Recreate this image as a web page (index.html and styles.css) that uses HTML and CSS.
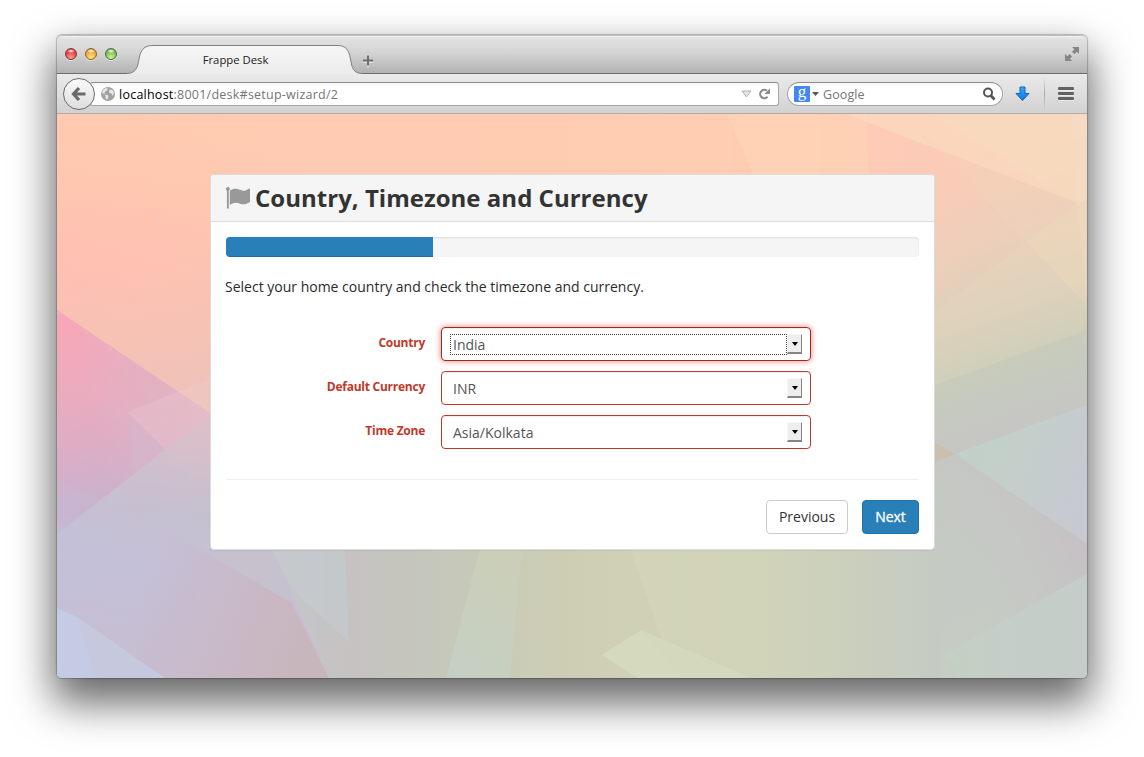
FILE: index.html
```html
<!DOCTYPE html>
<html lang="en">
<head>
<meta charset="utf-8">
<title>Frappe Desk</title>
<link rel="stylesheet" href="styles.css">
</head>
<body>
<div class="window">
  <header class="titlebar">
    <div class="lights"><i class="light red"></i><i class="light amber"></i><i class="light green"></i></div>
    <div class="tab">
      <svg class="tab-shape" width="236" height="29" viewBox="0 0 236 29">
        <defs><linearGradient id="tabfill" x1="0" y1="0" x2="0" y2="1"><stop offset="0" stop-color="#f6f6f6"/><stop offset="1" stop-color="#ececec"/></linearGradient></defs>
        <path d="M0 29V28.5C10 28.5 11 20 12 14C13.500 5 17 .5 26 .5H210C219 .5 222 5 223.500 14C225 23 226 28.500 236 28.500V29Z" fill="url(#tabfill)"/>
        <path d="M0 28.500C10 28.500 11 20 12 14C13.500 5 17 .5 26 .5H210C219 .5 222 5 223.500 14C225 23 226 28.500 236 28.500" fill="none" stroke="#808080"/>
      </svg>
      <span class="tab-title">Frappe Desk</span>
    </div>
    <svg class="plus" width="12" height="12" viewBox="0 0 12 12"><path d="M6 1v10M1 6h10" stroke="#fff" stroke-opacity=".5" stroke-width="2" transform="translate(0 1)"/><path d="M6 .5v10M1 5.500h10" stroke="#6e6e6e" stroke-width="2"/></svg>
    <svg class="expand" width="16" height="16" viewBox="0 0 16 16"><g fill="#858585"><path d="M8 1h7v7l-2.200-2.200-2.300 2.400-2.500-2.500 2.300-2.400z"/><path d="M1 8l2.300 2.200 2.300-2.300 2.500 2.500-2.300 2.300L8 15H1z"/></g></svg>
  </header>
  <nav class="toolbar">
    <div class="back"><svg width="16" height="16" viewBox="0 0 16 16"><path d="M8 2L2.500 8 8 14M2.500 8H14.500" fill="none" stroke="#6a6a6a" stroke-width="3.200"/></svg></div>
    <div class="urlbar">
      <svg class="globe" width="14" height="14" viewBox="0 0 14 14"><circle cx="7" cy="7" r="7" fill="#a2a2a2"/><path d="M2 3l2.500-1.800L7 1.500 5.500 4 4 4.500 3.500 7 1 6zM4 7.500l3 .8.5 2L6 12.800 4.800 12 4.500 9.500zM8.500 2.500l3 .5 1.500 3-1.500 3-1-2.500-2.500-1z" fill="#e8e8e8"/></svg>
      <span class="url"><b>localhost</b>:8001/desk#setup-wizard/2</span>
      <svg class="drop" width="11" height="8" viewBox="0 0 11 8"><path d="M1 1h9L5.500 7z" fill="#e4e4e4" stroke="#b0b0b0"/></svg>
      <svg class="reload" width="13" height="12" viewBox="0 0 13 12"><path d="M9.500 8.800A4.200 4.200 0 1 1 9 2.700" fill="none" stroke="#8c8c8c" stroke-width="2.100"/><path d="M12 .3V6H6.500z" fill="#8c8c8c"/></svg>
    </div>
    <div class="search">
      <span class="g">g</span>
      <svg width="7" height="4" viewBox="0 0 7 4"><path d="M0 0h7L3.500 4z" fill="#555"/></svg>
      <span class="search-text">Google</span>
      <svg width="14" height="14" viewBox="0 0 14 14"><circle cx="6" cy="5.500" r="4" fill="none" stroke="#555" stroke-width="2"/><path d="M8.800 8.500l3.700 4" stroke="#555" stroke-width="2.700"/></svg>
    </div>
    <svg class="download" width="16" height="16" viewBox="0 0 16 16"><defs><linearGradient id="dl" x1="0" y1="0" x2="0" y2="1"><stop offset="0" stop-color="#37a6ff"/><stop offset="1" stop-color="#0878ef"/></linearGradient></defs><path d="M5 1h5v6.500h4L7.500 14.500 1 7.500h4z" fill="url(#dl)" stroke="#1765b5"/></svg>
    <i class="divider"></i>
    <div class="menu"><i></i><i></i><i></i></div>
  </nav>
  <main class="page">
    <svg class="wallpaper" viewBox="57 114 1030 564" preserveAspectRatio="none">
      <defs>
        <linearGradient id="left" gradientUnits="userSpaceOnUse" x1="165" y1="114" x2="90" y2="678"><stop offset="0" stop-color="#ffcbb0"/><stop offset=".18" stop-color="#ffc5b0"/><stop offset=".32" stop-color="#fdbdb4"/><stop offset=".42" stop-color="#f6bcb7"/><stop offset=".55" stop-color="#e2b6c0"/><stop offset=".68" stop-color="#c7bbcb"/><stop offset="1" stop-color="#c6bfd4"/></linearGradient>
        <linearGradient id="top"><stop offset="0" stop-color="#ffcbb2" stop-opacity="0"/><stop offset=".3" stop-color="#ffcbb2"/><stop offset="1" stop-color="#ffceb3"/></linearGradient>
        <linearGradient id="right" gradientUnits="userSpaceOnUse" x1="930" y1="170" x2="1106" y2="676"><stop offset="0" stop-color="#fccbb7"/><stop offset=".16" stop-color="#eccfba"/><stop offset=".28" stop-color="#dcd0bb"/><stop offset=".38" stop-color="#c9ccba"/><stop offset=".44" stop-color="#c5cac0"/><stop offset=".49" stop-color="#c6c6c2"/><stop offset=".65" stop-color="#c5cac4"/><stop offset="1" stop-color="#c5cdc3"/></linearGradient>
        <linearGradient id="fadeR"><stop offset="0" stop-color="#000"/><stop offset=".5" stop-color="#fff"/></linearGradient>
        <mask id="mr"><rect x="730" y="114" width="357" height="564" fill="url(#fadeR)"/></mask>
        <linearGradient id="pink" gradientUnits="userSpaceOnUse" x1="85" y1="325" x2="115" y2="535"><stop offset="0" stop-color="#f7a8b8"/><stop offset=".35" stop-color="#e9abbf"/><stop offset=".65" stop-color="#d7aec7"/><stop offset=".85" stop-color="#c9b2ce"/><stop offset="1" stop-color="#c8b8d2"/></linearGradient>
        <linearGradient id="haze" gradientUnits="userSpaceOnUse" x1="100" y1="450" x2="211" y2="425"><stop offset="0" stop-color="#dcb8c8" stop-opacity="0"/><stop offset="1" stop-color="#dfb4c2"/></linearGradient>
        <linearGradient id="peach" gradientUnits="userSpaceOnUse" x1="215" y1="400" x2="165" y2="215"><stop offset="0" stop-color="#edc2ba"/><stop offset=".5" stop-color="#f8c3b3" stop-opacity=".85"/><stop offset="1" stop-color="#ffc7b0" stop-opacity="0"/></linearGradient>
        <linearGradient id="lilac" gradientUnits="userSpaceOnUse" x1="175" y1="425" x2="150" y2="660"><stop offset="0" stop-color="#dcbfc9"/><stop offset=".35" stop-color="#c7bfcf"/><stop offset=".6" stop-color="#c4c0d8"/><stop offset="1" stop-color="#c6bed2"/></linearGradient>
        <linearGradient id="dusk" gradientUnits="userSpaceOnUse" x1="140" y1="590" x2="300" y2="650"><stop offset="0" stop-color="#c8b8ca" stop-opacity="0"/><stop offset=".5" stop-color="#c9bac9"/><stop offset="1" stop-color="#c8b6bd"/></linearGradient>
        <linearGradient id="floor" gradientUnits="userSpaceOnUse" x1="272" y1="0" x2="935" y2="0"><stop offset="0" stop-color="#c5c6cb"/><stop offset=".12" stop-color="#c5c2c1"/><stop offset=".3" stop-color="#c6c9b8"/><stop offset=".42" stop-color="#cccdb4"/><stop offset=".54" stop-color="#cfd0b5"/><stop offset=".75" stop-color="#ced2b7"/><stop offset="1" stop-color="#c5cbc3"/></linearGradient>
        <linearGradient id="glow" gradientUnits="userSpaceOnUse" x1="650" y1="0" x2="880" y2="0"><stop offset="0" stop-color="#d6d7be" stop-opacity=".5"/><stop offset="1" stop-color="#d6d7be" stop-opacity="0"/></linearGradient>
        <linearGradient id="cyan" gradientUnits="userSpaceOnUse" x1="955" y1="440" x2="1087" y2="480"><stop offset="0" stop-color="#c1d0c6"/><stop offset=".45" stop-color="#c4cfca"/><stop offset="1" stop-color="#c6c9d1"/></linearGradient>
        <linearGradient id="mauve" gradientUnits="userSpaceOnUse" x1="960" y1="590" x2="1087" y2="540"><stop offset="0" stop-color="#c6c9c5" stop-opacity="0"/><stop offset="1" stop-color="#c6c0c5"/></linearGradient>
        <linearGradient id="sea"><stop offset="0" stop-color="#c4d0c3"/><stop offset=".6" stop-color="#c5cdc9"/><stop offset="1" stop-color="#c5cdca"/></linearGradient>
        <linearGradient id="mint" x1="0" y1="1" x2=".5" y2="0"><stop offset="0" stop-color="#c4cfc4"/><stop offset="1" stop-color="#cbcfb9"/></linearGradient>
        <linearGradient id="rosy" gradientUnits="userSpaceOnUse" x1="866" y1="140" x2="1000" y2="200"><stop offset="0" stop-color="#ffcab6"/><stop offset="1" stop-color="#f6cdb8" stop-opacity="0"/></linearGradient>
      </defs>
      <rect x="57" y="114" width="400" height="564" fill="url(#left)"/>
      <rect x="100" y="114" width="840" height="62" fill="url(#top)"/>
      <rect x="730" y="114" width="357" height="564" fill="url(#right)" mask="url(#mr)"/>
      <path d="M57 176H213V416L57 310z" fill="url(#peach)"/>
      <path d="M57 310L211 414V540H57z" fill="url(#pink)"/>
      <path d="M57 310L211 414V540H57z" fill="url(#haze)"/>
      <path d="M127 412L211 378V495z" fill="#f4cfd2" opacity=".25"/>
      <path d="M211 414L57 534V678H330L280 545H211z" fill="url(#lilac)"/>
      <path d="M127 412L137 514 211 555V495z" fill="#c5c2d2" opacity=".18"/>
      <path d="M57 480L135 515 75 617 57 580z" fill="#c3c2da" opacity=".18"/>
      <path d="M211 495V560L137 514z" fill="#c2c3cf" opacity=".4"/>
      <path d="M137 516L211 555 292 603 329 678H90z" fill="url(#dusk)"/>
      <path d="M211 545H272L292 603 211 557z" fill="#c5c1cb" opacity=".8"/>
      <path d="M272 549H940V678H329z" fill="url(#floor)"/>
      <path d="M272 549H345L349 642 292 589z" fill="#c4cacd" opacity=".75"/>
      <path d="M57 608L77 617 165 678H57z" fill="#c6c9de"/>
      <path d="M57 608L77 617 96 678H57z" fill="#c4cbe6" opacity=".8"/>
      <path d="M480 549H522L510 678H446z" fill="url(#mint)"/>
      <path d="M630 549H890V678H676z" fill="url(#glow)"/>
      <path d="M602 655L641 630 751 678H638z" fill="#d4d8bd"/>
      <path d="M602 655L641 630 681 678H638z" fill="#d8dbc1" opacity=".4"/>
      <path d="M727 114H866L869 174H753z" fill="#ffd3b5" opacity=".6"/>
      <path d="M866 114L869 174 935 300 1026 242 906 114z" fill="url(#rosy)"/>
      <path d="M846 114L1077 203 1087 200V114z" fill="#fadcc0" opacity=".6"/>
      <path d="M930 114L1077 203 1070 114z" fill="#f6dfbf" opacity=".4"/>
      <path d="M1070 114L1077 203 1087 306V114z" fill="#f1e0c8" opacity=".4"/>
      <path d="M906 114L1087 306V203L1077 203 930 145z" fill="#f0d8ba" opacity=".28"/>
      <path d="M935 312L1077 203 1087 306V330L935 385z" fill="#ecdcbd" opacity=".18"/>
      <path d="M1077 203L1087 306 1026 242z" fill="#ecdcbd" opacity=".15"/>
      <path d="M955 454L1087 405V544z" fill="url(#cyan)"/>
      <path d="M955 454L1087 544V574L944 655z" fill="url(#mauve)"/>
      <path d="M935 442L955 454 935 462z" fill="#c9c0b2"/>
      <path d="M944 655L1087 574V678H959z" fill="url(#sea)"/>
    </svg>
    <section class="card">
      <div class="card-head">
        <svg width="25" height="22" viewBox="0 0 25 22"><path d="M2.800 3.600V21.500H.9V3.600A1.900 1.900 0 1 1 2.800 3.600z" fill="#999"/><path d="M3.800 3.500C7 1.700 9 1.200 11.500 2c3 1 5.500 2.500 8.500 1.200 1.500-.7 2.500-1.300 3.200-1.700q.8-.2.800.7V14.500q0 .6-.8 1c-3.500 2-6 2.300-9.200 1.200-3.800-1.500-6.300-1.100-10.200 1.400z" fill="#999"/></svg>
        <h1>Country, Timezone and Currency</h1>
      </div>
      <div class="card-body">
        <div class="progress"><div class="progress-bar"></div></div>
        <p>Select your home country and check the timezone and currency.</p>
        <div class="row"><label>Country</label><div class="select focused"><span class="value">India</span><i class="arrow"></i></div></div>
        <div class="row"><label>Default Currency</label><div class="select"><span class="value">INR</span><i class="arrow"></i></div></div>
        <div class="row"><label>Time Zone</label><div class="select"><span class="value">Asia/Kolkata</span><i class="arrow"></i></div></div>
        <div class="actions"><button class="btn">Previous</button><button class="btn primary">Next</button></div>
      </div>
    </section>
  </main>
</div>
</body>
</html>
```
FILE: styles.css
```css
* { box-sizing: border-box; }
html, body { margin: 0; height: 757px; overflow: hidden; background: #fff; }
body { padding: 35px 57px 0; font-family: "Open Sans", "Noto Sans", sans-serif; }
svg { display: block; flex: none; }
.window { width: 1030px; height: 643px; border-radius: 5px; box-shadow: 0 0 1px 1px rgba(0,0,0,.22), 0 21px 42px 4px rgba(0,0,0,.6); }

.titlebar { display: flex; height: 39px; border-radius: 5px 5px 0 0; border-top: 1px solid #bdbdbd; border-bottom: 1px solid #6d6d6d; background: linear-gradient(#f5f5f5 0, #e2e2e2 2px, #d4d4d4 45%, #b2b2b2); }
.lights { display: flex; gap: 8px; padding: 12px 0 0 8px; width: 72px; }
.light { width: 12px; height: 12px; border-radius: 50%; border: 1px solid; box-shadow: 0 1px 0 rgba(255,255,255,.5); }
.red { border-color: #873434; background: radial-gradient(ellipse 4px 2px at 50% 20%, #fff, transparent), radial-gradient(circle at 50% 85%, #ff9c98, #e03b42 65%, #b53237); }
.amber { border-color: #8f642b; background: radial-gradient(ellipse 4px 2px at 50% 20%, #fff, transparent), radial-gradient(circle at 50% 85%, #ffe482, #eba439 65%, #b87a2c); }
.green { border-color: #4b7337; background: radial-gradient(ellipse 4px 2px at 50% 20%, #fff, transparent), radial-gradient(circle at 50% 85%, #cdf29c, #79b856 65%, #527f3c); }
.tab { position: relative; display: flex; justify-content: center; width: 236px; height: 29px; margin: 9px 0 0 -2px; padding-right: 19px; }
.tab-shape { position: absolute; left: 0; top: 0; }
.tab-title { position: relative; font-size: 11.300px; line-height: 30px; color: #222; }
.plus { margin: 19px 0 0 -1px; }
.expand { margin: 10px 7px 0 auto; }

.toolbar { display: flex; align-items: center; height: 40px; padding: 0 13px 0 6px; background: linear-gradient(#eaeaea, #d2d2d2); border-bottom: 1px solid #b2aaa6; }
.back { z-index: 1; display: flex; align-items: center; justify-content: center; flex: none; width: 32px; height: 32px; border: 1px solid #6b6b6b; border-radius: 50%; background: linear-gradient(#fafafa, #dedede); margin-top: 1px; }
.urlbar { display: flex; align-items: center; width: 689px; height: 24px; margin-left: -5px; padding: 0 7px 0 10px; border: 1px solid #a5a5a5; border-top-color: #8e8e8e; border-radius: 3px; background: linear-gradient(#f5f5f5, #fff 4px); margin-top: 1px; }
.url { margin-left: 4px; padding-top: 1px; font-size: 12.500px; line-height: 22px; letter-spacing: .24px; color: #757575; }
.url b { font-weight: 400; color: #000; }
.drop { margin-left: auto; }
.reload { margin-left: 6px; }
.search { display: flex; align-items: center; width: 216px; height: 24px; margin: 1px 0 0 8px; padding: 0 6px; border: 1px solid #a5a5a5; border-top-color: #8e8e8e; border-radius: 12px; background: linear-gradient(#f5f5f5, #fff 4px); }
.g { width: 16px; height: 16px; margin-right: 2px; border-radius: 1px; background: #4486f4; color: #fff; font: 17px/12px "Liberation Serif", serif; text-align: center; }
.search-text { flex: 1; margin-left: 4px; padding-top: 1px; font-size: 12.500px; line-height: 22px; letter-spacing: .1px; color: #757575; }
.download { margin-left: 12px; }
.divider { width: 1px; height: 34px; margin-left: 13px; background: linear-gradient(transparent, #a2a9b4, transparent); }
.menu { display: flex; flex-direction: column; gap: 2px; margin: 0 0 0 auto; }
.menu i { width: 16px; height: 3px; border-radius: 1px; background: #626262; box-shadow: 0 1px 0 rgba(255,255,255,.4); }

.page { position: relative; height: 564px; padding-top: 60px; border-radius: 0 0 5px 5px; overflow: hidden; }
.wallpaper { position: absolute; inset: 0; width: 100%; height: 100%; }
.card { position: relative; width: 725px; height: 376px; margin-left: 153px; border: 1px solid #dcdcdc; border-radius: 4px; background: #fff; box-shadow: 0 1px 1px rgba(0,0,0,.05); color: #292b2c; }
.card-head { display: flex; height: 47px; padding: 0 15px; background: #f5f5f5; border-bottom: 1px solid #ddd; border-radius: 3px 3px 0 0; }
.card-head svg { margin-top: 12px; }
h1 { margin: 0 0 0 4px; font-size: 24px; line-height: 46px; font-weight: 700; letter-spacing: .02px; color: #333; white-space: nowrap; }
.card-body { padding: 15px; }
.progress { height: 20px; border-radius: 4px; background: #f5f5f5; box-shadow: inset 0 1px 2px rgba(0,0,0,.1); overflow: hidden; }
.progress-bar { width: 207px; height: 20px; background: #2980b9; box-shadow: inset 0 -1px 0 rgba(0,0,0,.15); }
p { margin: 20px 0 30px -1px; font-size: 14px; line-height: 20px; }
.row { display: flex; height: 34px; margin-bottom: 10px; }
.row label { width: 199px; margin-right: 16px; text-align: right; font-size: 12px; line-height: 32px; font-weight: 700; letter-spacing: -.25px; color: #c0392b; }
.select { display: flex; align-items: center; width: 370px; height: 34px; padding: 0 8px; border: 1px solid #c0392b; border-radius: 4px; box-shadow: inset 0 1px 1px rgba(0,0,0,.075); }
.value { flex: 1; height: 21px; padding-left: 2px; border: 1px solid transparent; font-size: 14px; line-height: 20px; color: #555; }
.focused { border-color: #962d22; box-shadow: inset 0 1px 1px rgba(0,0,0,.075), 0 0 6px #df7c72; }
.focused .value { border: 1px dotted #444; }
.arrow { width: 15px; height: 20px; border: solid; border-width: 1px 1px 2px 1px; border-color: #f8f8f8 #858585 #858585 #f8f8f8; background: #eee; display: flex; align-items: center; justify-content: center; }
.arrow::before { content: ""; border: solid transparent; border-width: 4px 3.500px 0; border-top-color: #000; }
.actions { display: flex; justify-content: flex-end; gap: 14px; margin-top: 30px; padding-top: 20px; border-top: 1px solid #eee; }
.btn { width: 82px; height: 34px; padding: 0; border: 1px solid #ccc; border-radius: 4px; background: #fff; font: 14px/20px "Open Sans", "Noto Sans", sans-serif; color: #333; }
.btn.primary { width: 57px; border-color: #2472a4; background: #2980b9; color: #fff; -webkit-text-stroke: .3px #fff; }
```
